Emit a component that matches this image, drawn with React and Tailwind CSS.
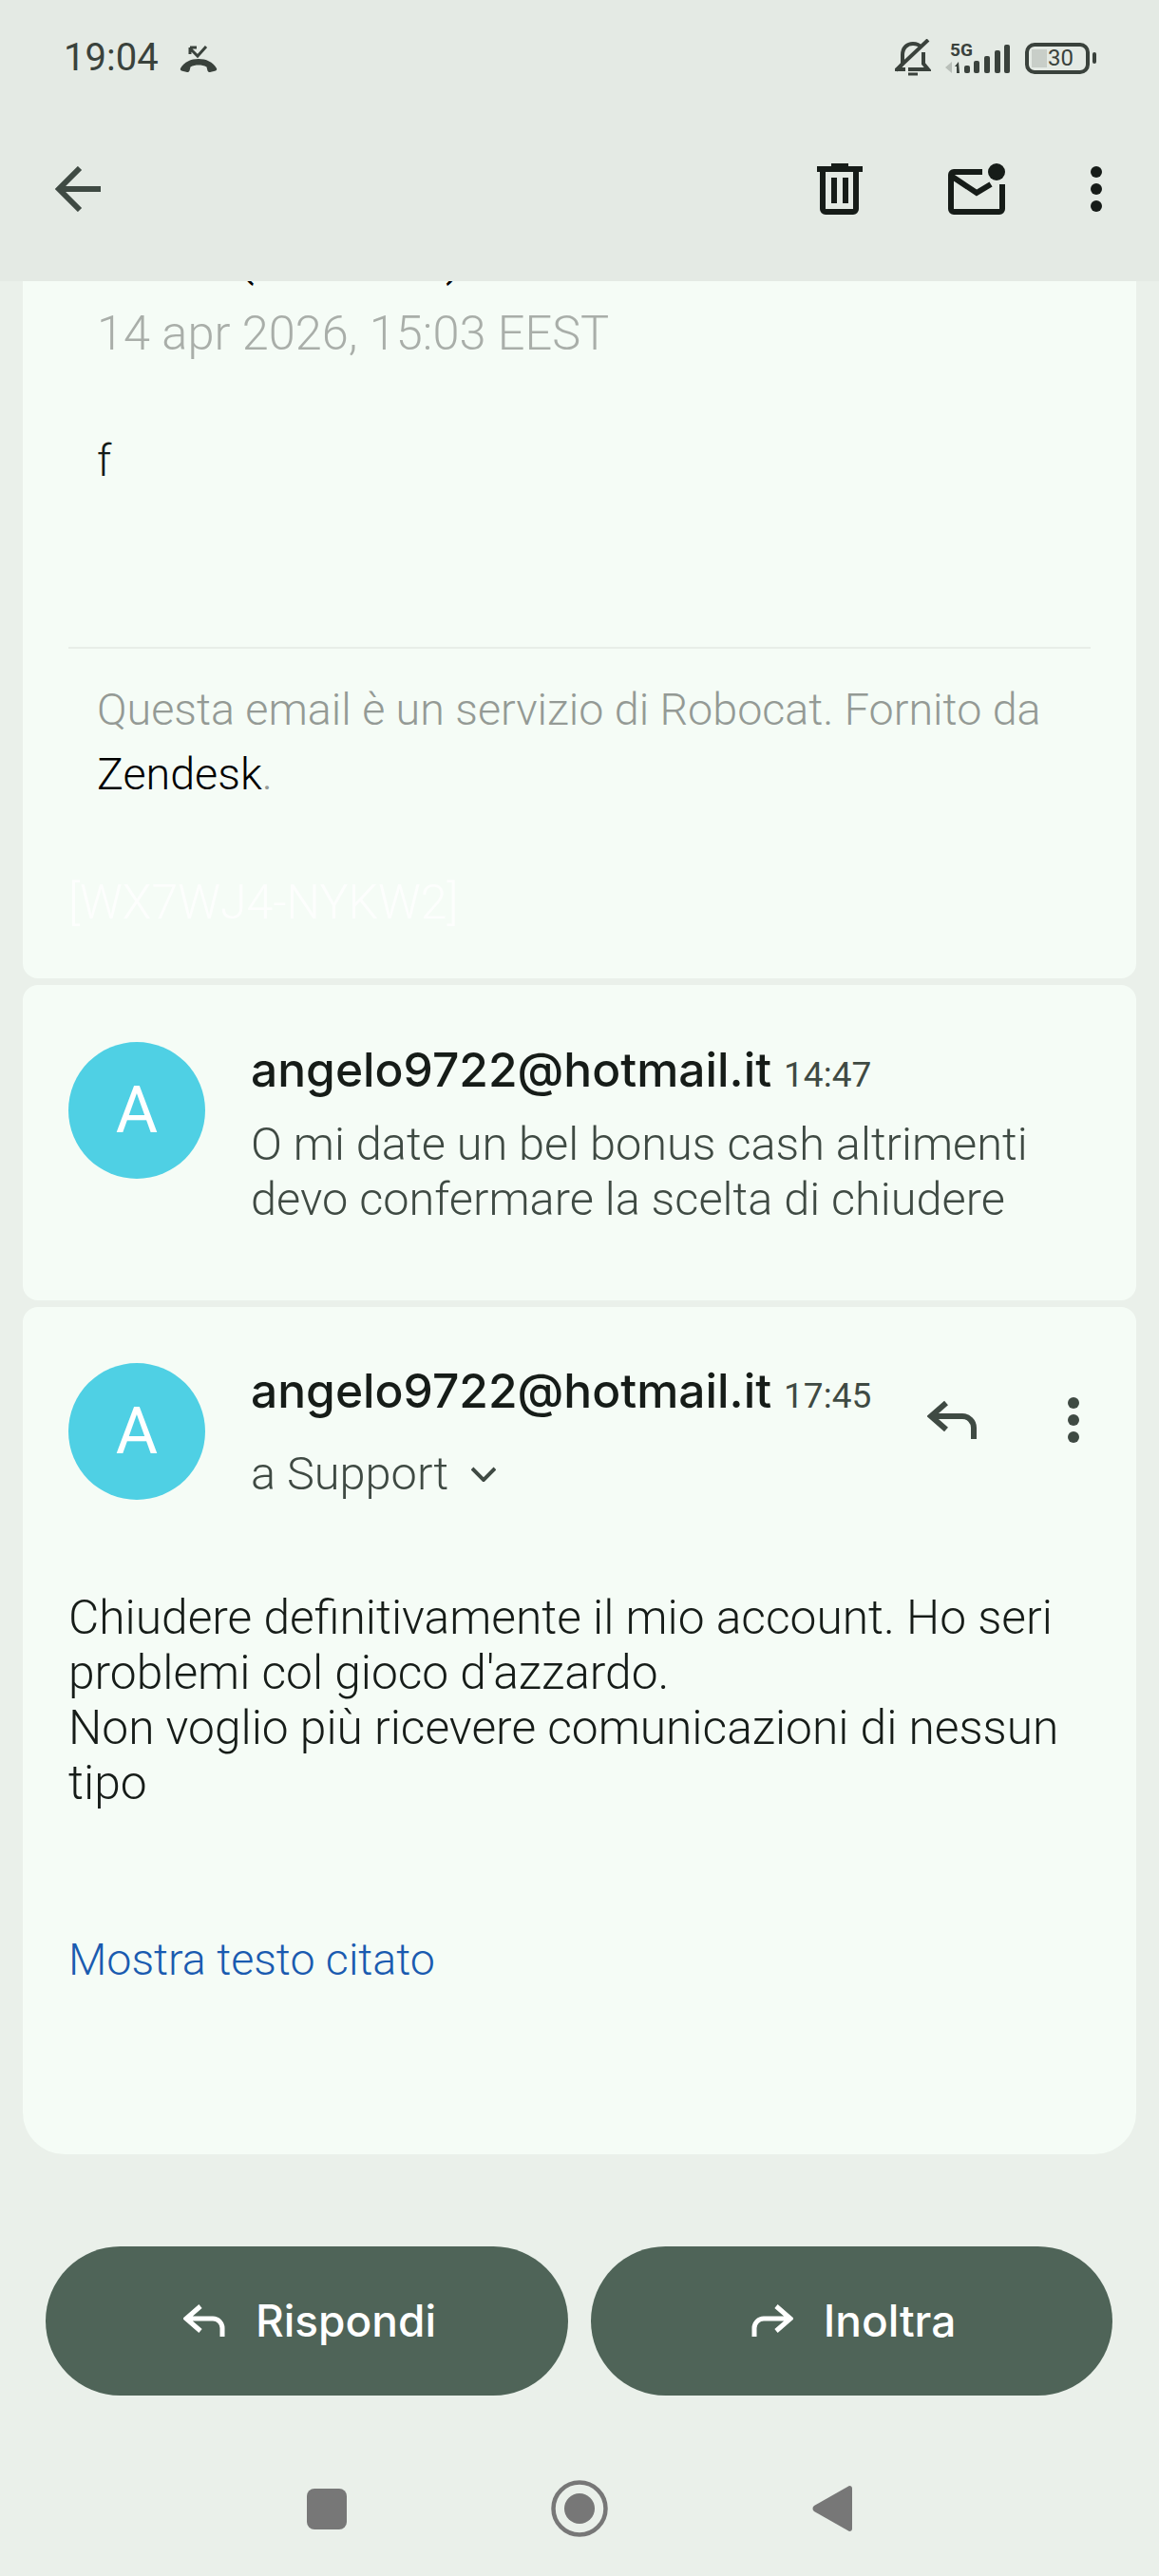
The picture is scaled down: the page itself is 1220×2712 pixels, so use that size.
import React from "react";

const roboto = "font-['Roboto',sans-serif]";
const sans = "font-['Inter',sans-serif]";

const Dots = ({ fill }) => (
  <svg width="12" height="48" viewBox="0 0 12 48" fill={fill}>
    <circle cx="6" cy="6" r="6" />
    <circle cx="6" cy="24" r="6" />
    <circle cx="6" cy="42" r="6" />
  </svg>
);

const Avatar = () => (
  <div className={`w-[144px] h-[144px] shrink-0 rounded-full bg-[#4fd0e4] text-white flex items-center justify-center text-[68px] ${roboto}`}>
    A
  </div>
);

const NameLine = ({ time }) => (
  <div className="flex items-baseline gap-[13px] h-[58px]">
    <span className={`text-[49.700px] leading-[58px] font-medium text-[#161c18] ${sans}`}>angelo9722@hotmail.it</span>
    <span className={`text-[37px] text-[#3f4a43] ${roboto}`}>{time}</span>
  </div>
);

const StatusBar = () => (
  <div className="h-[120px] flex items-center justify-between pl-[67px] pr-[66px] pt-[2px] text-[#3a423c]">
    <div className="flex items-center gap-[22px]">
      <span className={`text-[40px] leading-none ${roboto}`}>19:04</span>
      <svg width="40" height="28" viewBox="0 0 40 28" className="mt-[2px]">
        <path d="M1 24c4-7 11-10 19-10s15 3 19 10c.5 1 0 2-1 2.500l-6 1.500c-1 0-2-.5-2.500-1.500l-1-4c-2.500-1.500-5.500-2-8.500-2s-6 .5-8.500 2l-1 4c-.5 1-1.500 1.500-2.500 1.500l-6-1.500c-1-.5-1.500-1.500-1-2.500z" fill="#3a423c" />
        <path d="M11 3l8 8 9-10M11 2v7M11 2h7" fill="none" stroke="#3a423c" strokeWidth="3" />
      </svg>
    </div>
    <div className="flex items-center">
      <svg width="38" height="40" viewBox="0 0 38 40" fill="none" stroke="#3a423c" strokeWidth="4">
        <path d="M8 26V17C8 9 13 5 19 5c4 0 7 1.500 9 4M30 14v12l5 6H14M8 26l-5 6h8" />
        <path d="M1 33L35 1" />
        <path d="M14 37h10" strokeWidth="3" />
      </svg>
      <div className="ml-[15px] w-[70px] h-[33px] relative">
        <svg width="70" height="33" viewBox="0 0 70 33" fill="#3a423c">
          <path d="M0 26l7-6v12z" fill="#b9bfb9" />
          <path d="M14 20l-4 5h2v7h3z" />
          <rect x="20" y="24" width="6" height="8" rx="2" />
          <rect x="30" y="19" width="6" height="13" rx="2" />
          <rect x="41" y="14" width="6" height="18" rx="2" />
          <rect x="52" y="8" width="6" height="24" rx="2" />
          <rect x="62" y="2" width="6" height="30" rx="2" />
        </svg>
        <span className={`absolute left-[5px] top-0 text-[19px] leading-[15px] font-bold ${roboto}`}>5G</span>
      </div>
      <div className="ml-[14px] w-[68px] h-[33px] rounded-[10px] border-[4px] border-[#3a423c] flex items-center relative">
        <div className="absolute left-[3px] top-[3px] bottom-[3px] w-[16px] bg-[#c8cec8]" />
        <span className={`relative w-full text-center pl-[7px] text-[24px] leading-none ${roboto}`}>30</span>
      </div>
      <div className="ml-[3px] w-[4px] h-[12px] rounded-[2px] bg-[#3a423c]" />
    </div>
  </div>
);

const Toolbar = () => (
  <div className="h-[176px] pb-[18px] flex items-center pl-[58px] pr-[60px]">
    <svg width="48" height="48" viewBox="0 0 48 48" fill="none" stroke="#3f4a43" strokeWidth="6">
      <path d="M48 24H5M26 2L4 24l22 22" />
    </svg>
    <div className="ml-auto flex items-center">
      <svg width="48" height="54" viewBox="0 0 48 54" fill="#161c18">
        <rect x="15" y="0" width="18" height="5" />
        <rect x="0" y="3" width="48" height="6" />
        <path d="M3 8h41v40a6 6 0 0 1-6 6H9a6 6 0 0 1-6-6zM9 8v40h29V8z" fillRule="evenodd" />
        <rect x="15" y="15" width="6" height="27" />
        <rect x="27" y="15" width="6" height="27" />
      </svg>
      <svg width="60" height="54" viewBox="0 0 60 54" className="ml-[90px]" fill="none" stroke="#161c18" strokeWidth="6">
        <path d="M36 9H6a3 3 0 0 0-3 3v36a3 3 0 0 0 3 3h48a3 3 0 0 0 3-3V22" />
        <path d="M3 13l27 18 15-9" />
        <circle cx="51" cy="9" r="9" fill="#161c18" stroke="none" />
      </svg>
      <div className="ml-[90px]">
        <Dots fill="#161c18" />
      </div>
    </div>
  </div>
);

const CollapsedCard = () => (
  <div className="bg-[#f5fcf6] rounded-[16px] h-[332px] px-[48px] pt-[60px] flex gap-[48px]">
    <Avatar />
    <div>
      <NameLine time="14:47" />
      <p className={`mt-[21px] text-[48.700px] leading-[58px] font-light text-[#3f4a43] ${roboto}`}>
        O mi date un bel bonus cash altrimenti<br />devo confermare la scelta di chiudere
      </p>
    </div>
  </div>
);

export default function App() {
  return (
    <div className="w-[1220px] h-[2712px] bg-[#eaf0ea] flex flex-col overflow-hidden">
      <header className="bg-[#e4eae4] shrink-0 relative z-10">
        <StatusBar />
        <Toolbar />
      </header>

      <main className="h-[1972px] shrink-0 overflow-hidden flex flex-col gap-[7px]">
        <div className={`mx-[24px] -mt-[51px] h-[785px] shrink-0 bg-[#f5fcf6] rounded-[16px] ${roboto}`}>
          <div className="pl-[37px] text-[48px] leading-[58px] text-black">Robocat (Assistant)</div>
          <div className="pl-[78px] mt-[19px] text-[50.500px] leading-[58px] font-light text-[#a9aea9]">14 apr 2026, 15:03 EEST</div>
          <div className="pl-[78px] mt-[76px] text-[46px] leading-[58px] font-light text-[#161c18]">f</div>
          <div className="mx-[48px] mt-[167px] h-[2px] bg-[#e8eee8]" />
          <p className="pl-[78px] pr-[40px] mt-[30px] text-[46.650px] leading-[68px] font-light text-[#949a95]">
            Questa email è un servizio di Robocat. Fornito da <span className="text-black">Zendesk</span>.
          </p>
          <div className="pl-[48px] mt-[72px] text-[50px] leading-[58px] font-light text-[#fdfefd]">[WX7WJ4-NYKW2]</div>
        </div>

        <div className="mx-[24px] shrink-0">
          <CollapsedCard />
        </div>

        <div className="mx-[24px] h-[892px] shrink-0 bg-[#f5fcf6] rounded-t-[16px] rounded-b-[44px] px-[48px] pt-[59px]">
          <div className="flex gap-[48px]">
            <Avatar />
            <div className="flex-1">
              <NameLine time="17:45" />
              <div className="mt-[30px] flex items-center gap-[24px]">
                <span className={`text-[48.700px] leading-[58px] font-light text-[#3f4a43] ${roboto}`}>a Support</span>
                <svg width="26" height="16" viewBox="0 0 26 16" fill="none" stroke="#3f4a43" strokeWidth="4">
                  <path d="M1 2l12 12L25 2" />
                </svg>
              </div>
            </div>
            <div className="flex items-center gap-[96px] pr-[12px] h-[48px] mt-[36px] -ml-[48px]">
              <svg width="52" height="42" viewBox="0 0 52 42" fill="none" stroke="#3f4a43" strokeWidth="6">
                <path d="M20 3L4 17l16 14M4 17h33a12 12 0 0 1 12 12v12" />
              </svg>
              <Dots fill="#3f4a43" />
            </div>
          </div>
          <p className={`mt-[93px] text-[49.700px] leading-[58px] font-light text-[#161c18] ${roboto}`}>
            Chiudere definitivamente il mio account. Ho seri<br />
            problemi col gioco d'azzardo.<br />
            Non voglio più ricevere comunicazioni di nessun<br />
            tipo
          </p>
          <a className={`block mt-[128px] text-[46.600px] leading-[58px] font-light text-[#1a5bb0] ${roboto}`}>Mostra testo citato</a>
        </div>
      </main>

      <div className="flex-1 flex flex-col">
        <div className="flex gap-[24px] px-[48px] mt-[97px]">
          <button className={`w-[550px] h-[157px] pl-[6px] rounded-full bg-[#4f6458] text-white flex items-center justify-center gap-[32px] text-[46px] font-medium ${sans}`}>
            <svg width="44" height="36" viewBox="0 0 44 36" fill="none" stroke="#fff" strokeWidth="5">
              <path d="M18 2L3 15l15 13M3 15h28a10 10 0 0 1 10 10v9" />
            </svg>
            Rispondi
          </button>
          <button className={`w-[549px] h-[157px] pl-[4px] rounded-full bg-[#4f6458] text-white flex items-center justify-center gap-[32px] text-[46px] font-medium ${sans}`}>
            <svg width="44" height="36" viewBox="0 0 44 36" fill="none" stroke="#fff" strokeWidth="5">
              <path d="M26 2l15 13-15 13M41 15H13A10 10 0 0 0 3 25v9" />
            </svg>
            Inoltra
          </button>
        </div>
        <nav className="mt-[89px] flex items-center pl-[323px]">
          <div className="w-[42px] h-[43px] rounded-[8px] bg-[#777777]" />
          <svg width="60" height="60" viewBox="0 0 60 60" className="ml-[215px]">
            <circle cx="30" cy="30" r="27.500" fill="none" stroke="#777777" strokeWidth="4.500" />
            <circle cx="30" cy="30" r="16" fill="#777777" />
          </svg>
          <svg width="42" height="48" viewBox="0 0 42 48" className="ml-[215px]" fill="#777777">
            <path d="M39 0c2 0 3 1 3 3v42c0 2-1 3-3 3L2 27c-2-1.500-2-4.500 0-6z" />
          </svg>
        </nav>
      </div>
    </div>
  );
}
